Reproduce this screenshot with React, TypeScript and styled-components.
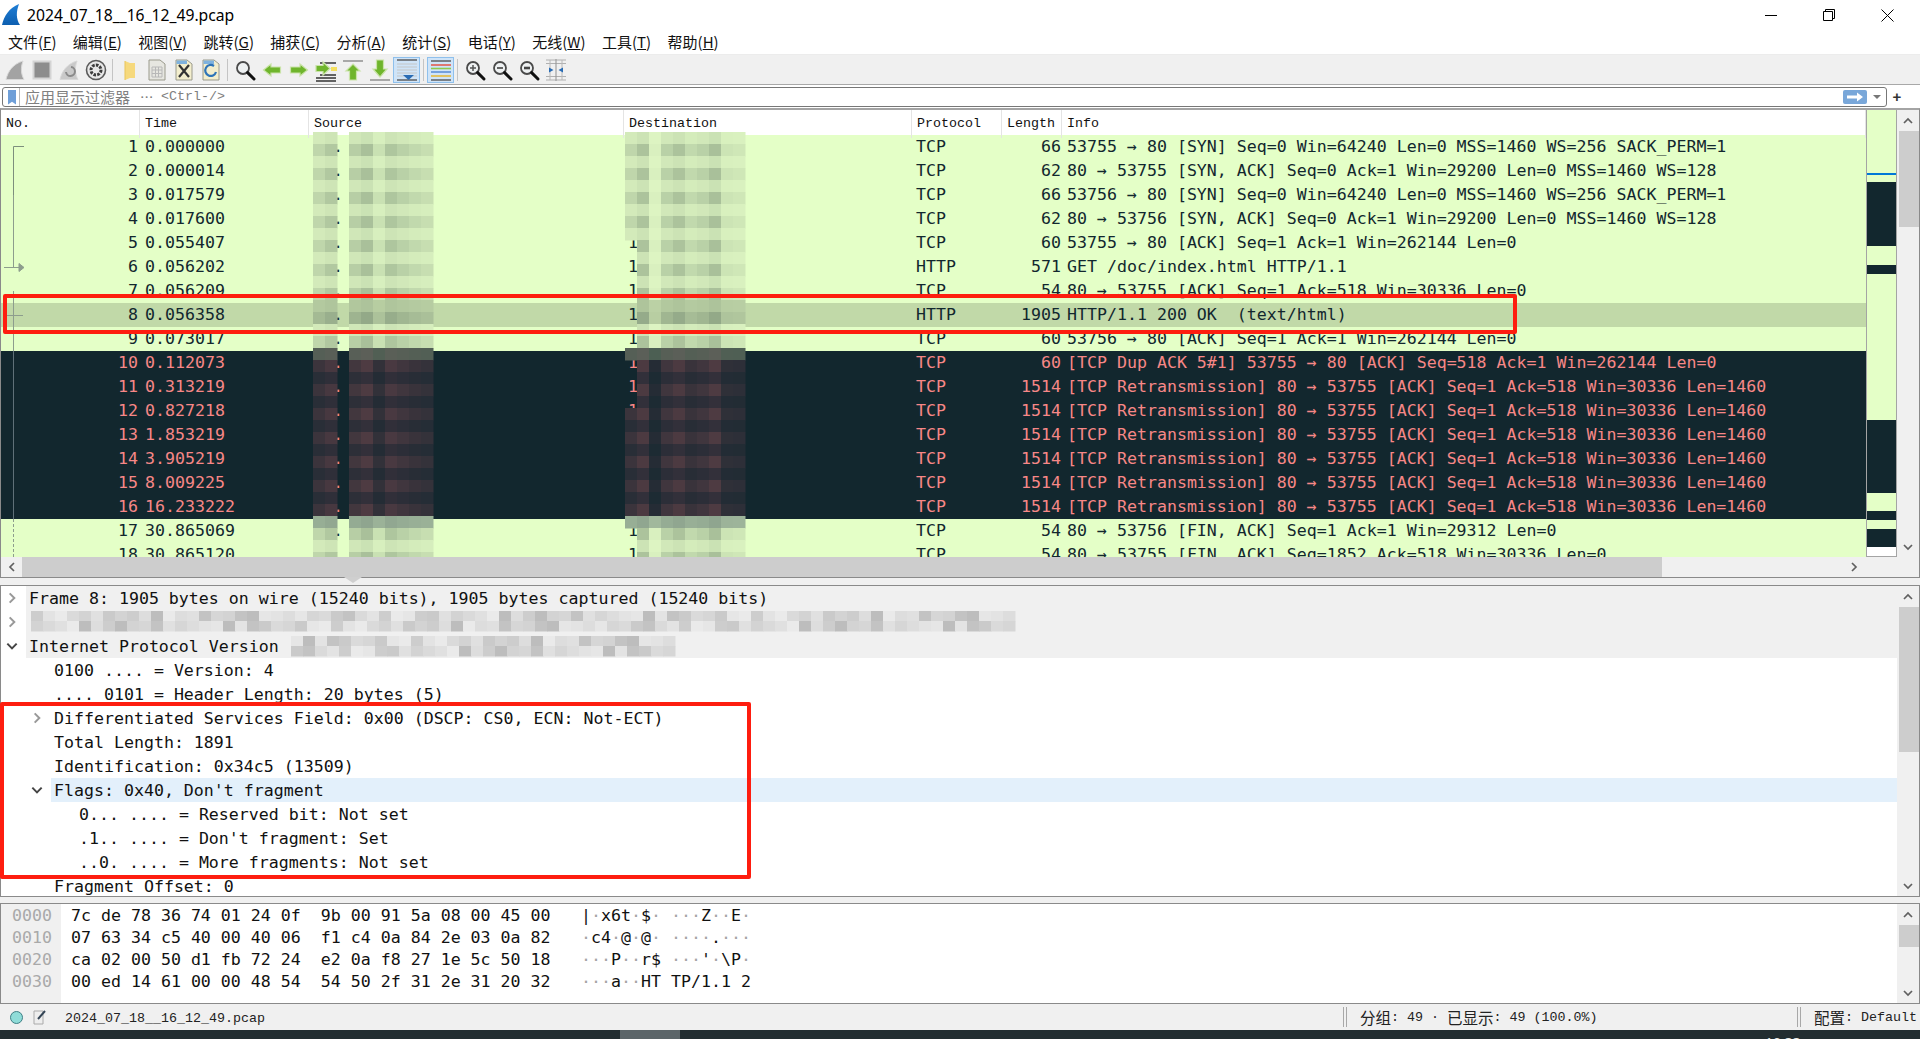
import React from "react";
import styled, { createGlobalStyle } from "styled-components";

const MONO = `"DejaVu Sans Mono", "Liberation Mono", "Noto Sans CJK SC", monospace`;
const SMALL = `"Liberation Mono", "Noto Sans CJK SC", monospace`;

const Global = createGlobalStyle`
  html, body { margin: 0; padding: 0; background: #fff; overflow: hidden; }
  * { box-sizing: border-box; }
`;

const Page = styled.div`
  position: relative;
  width: 1920px;
  height: 1039px;
  display: flex;
  flex-direction: column;
  overflow: hidden;
  background: #f0f0f0;
`;

const TitleBar = styled.div`
  height: 30px;
  background: #fff;
  display: flex;
  align-items: center;
  padding-left: 2px;
`;
const TitleText = styled.div`
  margin-left: 7px;
  font: 15.7px "Noto Sans", sans-serif;
  color: #000;
  flex: 1;
`;
const WinControls = styled.div`
  display: flex;
  align-items: center;
  height: 30px;
  padding-right: 26px;
  gap: 46px;
`;

const MenuBar = styled.div`
  height: 25px;
  background: #fff;
  display: flex;
  align-items: center;
  padding: 0 0 2px 8px;
  gap: 16.4px;
  border-bottom: 1px solid #ececec;
`;
const MenuItem = styled.span`
  font: 15px "Noto Sans CJK SC", sans-serif;
  color: #111;
`;

const Toolbar = styled.div`
  height: 30px;
  background: #f0f0f0;
  display: flex;
  align-items: center;
  padding-left: 1px;
  border-bottom: 1px solid #a8a8a8;
`;
const ToolButton = styled.div<{ $on?: boolean }>`
  width: 27px;
  height: 26px;
  display: flex;
  align-items: center;
  justify-content: center;
  background: ${(p) => (p.$on ? "#cfe4f8" : "transparent")};
  border: 1px solid ${(p) => (p.$on ? "#8fc0ec" : "transparent")};
`;
const ToolSep = styled.div`
  width: 1px;
  height: 22px;
  margin: 0 3px;
  background: #c4c4c4;
`;

const FilterRow = styled.div`
  height: 25px;
  background: #fff;
  padding: 2px 0 3px 2px;
  display: flex;
  align-items: stretch;
`;
const FilterBox = styled.div`
  width: 1885px;
  border: 1px solid #777;
  border-radius: 3px;
  display: flex;
  align-items: center;
  padding: 0 5px 0 5px;
  background: #fff;
`;
const Bookmark = styled.div`
  width: 8px;
  height: 15px;
  background: #6f9fd8;
  clip-path: polygon(0 0, 100% 0, 100% 100%, 50% 82%, 0 100%);
`;
const FilterDiv = styled.div`
  width: 1px;
  height: 18px;
  background: #bbb;
  margin: 0 5px 0 3px;
`;
const Placeholder = styled.div`
  flex: 1;
  display: flex;
  align-items: center;
  padding-bottom: 2px;
  color: #808080;
  font: 15px "Noto Sans CJK SC", sans-serif;
`;
const PlaceholderDots = styled.span`
  width: 21px;
  margin-left: 10px;
  font: 13.33px "Noto Sans CJK SC", sans-serif;
`;
const PlaceholderHint = styled.span`
  font: 13.33px ${SMALL};
  white-space: pre;
`;
const ApplyBtn = styled.div`
  width: 24px;
  height: 14px;
  background: #79a7d9;
  border-radius: 2px;
  display: flex;
  align-items: center;
  justify-content: center;
`;
const DropCaret = styled.div`
  width: 0;
  height: 0;
  margin-left: 6px;
  border-left: 4px solid transparent;
  border-right: 4px solid transparent;
  border-top: 4px solid #777;
`;
const PlusBtn = styled.div`
  width: 20px;
  text-align: center;
  font: bold 15px "Liberation Sans", sans-serif;
  color: #333;
  line-height: 20px;
`;

const PacketPane = styled.div`
  height: 470px;
  display: flex;
  flex-direction: column;
  border-top: 2px solid #a4a4a4;
  border-left: 1px solid #8a8a8a;
  border-right: 1px solid #8a8a8a;
  border-bottom: 1px solid #8a8a8a;
  margin-top: -2px;
  background: #f0f0f0;
`;
const PacketTop = styled.div`
  height: 447px;
  display: flex;
`;
const ListArea = styled.div`
  position: relative;
  width: 1865px;
  overflow: hidden;
  background: #fff;
`;
const cols = "139px 169px 315px 288px 90px 60px 1fr";
const HeaderRow = styled.div`
  height: 25px;
  display: grid;
  grid-template-columns: ${cols};
  background: #fff;
`;
const HeaderCell = styled.div`
  font: 13.33px/28px ${SMALL};
  color: #111;
  padding-left: 5px;
  border-right: 1px solid #e4e4e4;
`;
const Row = styled.div<{ $kind: string }>`
  height: 24px;
  display: grid;
  grid-template-columns: ${cols};
  font: 16.6px/24px ${MONO};
  white-space: pre;
  background: ${(p) => (p.$kind === "dark" ? "#12272e" : p.$kind === "sel" ? "#c1d9a8" : "#e4ffc7")};
  color: ${(p) => (p.$kind === "dark" ? "#f78787" : "#12272e")};
`;
const NoCell = styled.div`
  text-align: right;
  padding-right: 2px;
`;
const TimeCell = styled.div`
  padding-left: 5px;
`;
const Cell = styled.div`
  padding-left: 4px;
`;
const LenCell = styled.div`
  text-align: right;
  padding-right: 1px;
`;
const InfoCell = styled.div`
  padding-left: 5px;
  overflow: hidden;
`;
const Overlay = styled.svg`
  position: absolute;
  left: 0;
  top: 0;
  pointer-events: none;
`;
const Minimap = styled.div`
  width: 31px;
  height: 447px;
  border-left: 1px solid #a4a4a4;
  border-right: 1px solid #a4a4a4;
  border-bottom: 1px solid #a4a4a4;
  display: flex;
  flex-direction: column;
  background: #fff;
`;
const MiniSeg = styled.div<{ $h: number; $c: string }>`
  height: ${(p) => p.$h}px;
  background: ${(p) => p.$c};
  flex: none;
`;
const VBar = styled.div`
  flex: none;
  display: flex;
  flex-direction: column;
  background: #f0f0f0;
  width: 22px;
`;
const ArrowBtn = styled.div`
  height: 21px;
  flex: none;
  display: flex;
  align-items: center;
  justify-content: center;
`;
const VTrack = styled.div`
  flex: 1;
  display: flex;
  flex-direction: column;
  align-items: flex-end;
`;
const VThumb = styled.div<{ $h: number }>`
  width: 20px;
  height: ${(p) => p.$h}px;
  background: #cdcdcd;
`;
const HBar = styled.div`
  height: 20px;
  display: flex;
  align-items: stretch;
  background: #f0f0f0;
`;
const HArrow = styled.div`
  width: 21px;
  display: flex;
  align-items: center;
  justify-content: center;
`;
const HThumb = styled.div`
  width: 1640px;
  background: #cdcdcd;
`;
const HTail = styled.div`
  width: 203px;
  display: flex;
  align-items: center;
  justify-content: flex-end;
  padding-right: 5px;
`;

const Splitter = styled.div`
  position: relative;
  height: 7px;
  background: #f0f0f0;
`;
const SplitGrip = styled.div`
  position: absolute;
  left: 344px;
  top: -1px;
  width: 0;
  height: 0;
  border-left: 9px solid transparent;
  border-right: 9px solid transparent;
  border-top: 6px solid #cfcfcf;
`;

const DetailPane = styled.div`
  position: relative;
  height: 312px;
  display: flex;
  background: #fff;
  border: 1px solid #8a8a8a;
`;
const DetailList = styled.div`
  flex: 1;
  overflow: hidden;
`;
const DetailRow = styled.div`
  display: flex;
  height: 24px;
  font: 16.6px/26px ${MONO};
  color: #111;
  white-space: pre;
`;
const Gutter = styled.div<{ $level: number }>`
  width: ${(p) => 25 + p.$level * 25}px;
  flex: none;
  display: flex;
  align-items: center;
  justify-content: flex-end;
  padding-right: 7px;
`;
const RowBody = styled.div<{ $bg?: string }>`
  flex: 1;
  padding-left: 3px;
  background: ${(p) => p.$bg || "transparent"};
`;

const PaneGap = styled.div`
  height: 6px;
  background: #f0f0f0;
`;
const HexPane = styled.div`
  height: 101px;
  display: flex;
  background: #fff;
  border: 1px solid #8a8a8a;
`;
const Offsets = styled.div`
  width: 60px;
  background: #f0f0f0;
  padding: 1px 0 0 11px;
  font: 16.6px/22px ${MONO};
  color: #a9a9a9;
  white-space: pre;
`;
const HexBytes = styled.div`
  width: 520px;
  padding: 1px 0 0 10px;
  font: 16.6px/22px ${MONO};
  color: #111;
  white-space: pre;
`;
const HexAscii = styled.div`
  flex: 1;
  padding-top: 1px;
  font: 16.6px/22px ${MONO};
  color: #111;
  white-space: pre;
`;
const Dim = styled.span`
  color: #a5a5a5;
`;

const StatusBar = styled.div`
  height: 26px;
  background: #f0f0f0;
  display: flex;
  align-items: center;
  font: 13.33px ${SMALL};
  color: #222;
  white-space: pre;
  padding-left: 10px;
`;
const LedDot = styled.div`
  width: 13px;
  height: 13px;
  border-radius: 50%;
  background: #8fdcd8;
  border: 1px solid #3f7f85;
`;
const PencilSlot = styled.div`
  margin-left: 9px;
  width: 16px;
  height: 16px;
  display: flex;
`;
const StatusFile = styled.div`
  margin-left: 17px;
  width: 1278px;
  padding-top: 3px;
`;
const Grip = styled.div`
  width: 4px;
  height: 20px;
  border-left: 1px solid #a8a8a8;
  border-right: 1px solid #a8a8a8;
  margin-right: 13px;
`;
const StatusMid = styled.div`
  width: 437px;
  display: flex;
  align-items: center;
`;
const StatusEnd = styled.div`
  display: flex;
  align-items: center;
`;
const Cjk = styled.span`
  font: 15.5px "Noto Sans CJK SC", sans-serif;
  line-height: 16px;
`;
const Taskbar = styled.div`
  height: 9px;
  background: #222d31;
  padding-left: 620px;
  display: flex;
  overflow: hidden;
`;
const TaskActive = styled.div`
  width: 60px;
  height: 9px;
  background: #5c6569;
`;
const Clock = styled.div`
  margin-left: 1085px;
  padding-top: 6px;
  font: 14px/14px "Noto Sans", sans-serif;
  color: #e8e8e8;
`;

const RedBox = styled.div<{ $l: number; $t: number; $w: number; $h: number }>`
  position: absolute;
  left: ${(p) => p.$l}px;
  top: ${(p) => p.$t}px;
  width: ${(p) => p.$w}px;
  height: ${(p) => p.$h}px;
  border: 4px solid #fe1d0f;
  border-radius: 2px;
  pointer-events: none;
`;

/* ------------------ icons ------------------ */
const Chevron = ({ dir, color = "#606060", size = 12 }: { dir: "up" | "down" | "left" | "right"; color?: string; size?: number }) => {
  const d = {
    up: "M2 8 L6 4 L10 8",
    down: "M2 4 L6 8 L10 4",
    left: "M8 2 L4 6 L8 10",
    right: "M4 2 L8 6 L4 10",
  }[dir];
  return (
    <svg width={size} height={size} viewBox="0 0 12 12">
      <path d={d} fill="none" stroke={color} strokeWidth="1.7" />
    </svg>
  );
};

const Fin = ({ fill }: { fill: string }) => <path d="M3 21.5 C5 13 10 6 20 3 C17.5 10 18 16 21 21.5 Z" fill={fill} stroke="#d8d8d8" strokeWidth="1" />;

const Svg = ({ children, w = 24, h = 24 }: { children: React.ReactNode; w?: number; h?: number }) => (
  <svg width={w} height={h} viewBox="0 0 24 24">
    {children}
  </svg>
);

const Page24 = ({ fill = "#f4f4ee" }: { fill?: string }) => (
  <path d="M4 2 H15 L20 6 V22 H4 Z" fill={fill} stroke="#9a9a8c" strokeWidth="1" />
);
const Magnifier = ({ mark }: { mark?: "plus" | "minus" | "eq" }) => (
  <>
    <circle cx="10" cy="10" r="6" fill="#eef1f2" stroke="#4a4a4a" strokeWidth="1.8" />
    <path d="M14.6 14.6 L21 21" stroke="#111" strokeWidth="3" strokeLinecap="round" />
    {mark === "plus" && <path d="M7 10 H13 M10 7 V13" stroke="#555" strokeWidth="1.5" />}
    {mark === "minus" && <path d="M7 10 H13" stroke="#555" strokeWidth="1.8" />}
    {mark === "eq" && <path d="M7 10 H13" stroke="#444" strokeWidth="2.6" />}
  </>
);
const Arrow = ({ d }: { d: string }) => <path d={d} fill="#6fb52c" stroke="#c9e3a8" strokeWidth="1.2" />;

const icons: Record<string, React.ReactNode> = {
  start: <Fin fill="#a3a3a3" />,
  stop: <rect x="3.5" y="3.5" width="17" height="17" fill="#8d8d8d" stroke="#d4d4d4" strokeWidth="2" />,
  restart: (
    <>
      <Fin fill="#c9c9c9" />
      <path d="M9 14 a4.5 4.5 0 1 0 5 -5" fill="none" stroke="#8a8a8a" strokeWidth="2" />
    </>
  ),
  options: (
    <>
      <circle cx="12" cy="12" r="9.5" fill="#e8e8e8" stroke="#5a5a5a" strokeWidth="1.6" />
      <circle cx="12" cy="12" r="5" fill="none" stroke="#3c3c3c" strokeWidth="3" strokeDasharray="2.6 1.2" />
    </>
  ),
  open: (
    <>
      <path d="M7 3 L12 5 H17 V20 H12 L7 22 Z" fill="#f6d97d" />
      <path d="M7 3 V22" stroke="#e9c55b" strokeWidth="1" />
    </>
  ),
  file: (
    <>
      <Page24 fill="#e6e6e0" />
      <path d="M7 9 H17 V19 H7 Z M7 12 H17 M7 15.5 H17 M10.5 9 V19 M13.5 9 V19" fill="none" stroke="#b8b8b8" strokeWidth="1" />
    </>
  ),
  close: (
    <>
      <Page24 fill="#f3eecd" />
      <path d="M4.5 2.5 H15 V6 H4.5 Z" fill="#7fb2de" />
      <path d="M7 7 L17 19 M17 7 L7 19" stroke="#333" strokeWidth="2.2" />
    </>
  ),
  reload: (
    <>
      <Page24 fill="#f3eecd" />
      <path d="M4.5 2.5 H15 V6 H4.5 Z" fill="#7fb2de" />
      <path d="M15 8 a5.5 5.5 0 1 0 2 6" fill="none" stroke="#2e74b8" strokeWidth="2.2" />
    </>
  ),
  find: <Magnifier />,
  back: <Arrow d="M3.5 12 L11 6 V9 H20.5 V15 H11 V18 Z" />,
  forward: <Arrow d="M20.5 12 L13 6 V9 H3.5 V15 H13 V18 Z" />,
  goto: (
    <>
      <path d="M6 5 H22 M6 17 H22 M2 20 H22 M2 23 H22" stroke="#333" strokeWidth="1.4" />
      <path d="M17 9 H23 V13 H17 Z" fill="#f4df5e" />
      <Arrow d="M16 10.5 L9 4 V7.5 H2 V13.5 H9 V17 Z" />
    </>
  ),
  first: (
    <>
      <path d="M2 3 H22" stroke="#a8a8a8" strokeWidth="2" />
      <Arrow d="M12 6 L19 13 H15.5 V22 H8.5 V13 H5 Z" />
    </>
  ),
  last: (
    <>
      <path d="M2 22 H22" stroke="#a8a8a8" strokeWidth="2" />
      <Arrow d="M12 19 L19 11 H15.5 V2 H8.5 V11 H5 Z" />
    </>
  ),
  autoscroll: (
    <>
      <path d="M2 2 H22" stroke="#555" strokeWidth="1.4" />
      <path d="M2 6 H22 M2 9 H22 M2 12 H22 M2 15 H22 M2 18 H22" stroke="#c6c6c6" strokeWidth="1.2" />
      <path d="M2 22 H22" stroke="#555" strokeWidth="1.4" />
      <path d="M8 17 H19 L13.5 22 Z" fill="#2a6cb4" />
    </>
  ),
  colorize: (
    <>
      <path d="M2 3 H22" stroke="#555" strokeWidth="1.4" />
      <path d="M2 7 H22" stroke="#e25d4f" strokeWidth="1.6" />
      <path d="M2 10.5 H22" stroke="#8fc94f" strokeWidth="1.6" />
      <path d="M2 14 H22" stroke="#5d8fd6" strokeWidth="1.6" />
      <path d="M2 18 H22" stroke="#e5b93c" strokeWidth="1.6" />
      <path d="M2 22 H22" stroke="#555" strokeWidth="1.4" />
    </>
  ),
  zoomIn: <Magnifier mark="plus" />,
  zoomOut: <Magnifier mark="minus" />,
  zoomReset: <Magnifier mark="eq" />,
  resize: (
    <>
      <path d="M2 2 H22 M2 5.5 H22 M2 18.5 H22 M2 22 H22" stroke="#b0b0b0" strokeWidth="1.1" />
      <path d="M6 2 V22 M18 2 V22" stroke="#b8b8b8" strokeWidth="1" />
      <path d="M12 1 V23" stroke="#999" strokeWidth="1.1" />
      <path d="M5 9.5 L9.5 12 L5 14.5 Z M19 9.5 L14.5 12 L19 14.5 Z" fill="#2a6cb4" />
    </>
  ),
};

const tools: (string | [string, boolean])[] = [
  "start", "stop", "restart", "options", "|",
  "open", "file", "close", "reload", "|",
  "find", "back", "forward", "goto", "first", "last", ["autoscroll", true], "|",
  ["colorize", true], "|",
  "zoomIn", "zoomOut", "zoomReset", "resize",
];

/* ------------------ data ------------------ */
type Pkt = [number, string, string, number, string];
const RETR = "[TCP Retransmission] 80 → 53755 [ACK] Seq=1 Ack=518 Win=30336 Len=1460";
const packets: Pkt[] = [
  [1, "0.000000", "TCP", 66, "53755 → 80 [SYN] Seq=0 Win=64240 Len=0 MSS=1460 WS=256 SACK_PERM=1"],
  [2, "0.000014", "TCP", 62, "80 → 53755 [SYN, ACK] Seq=0 Ack=1 Win=29200 Len=0 MSS=1460 WS=128"],
  [3, "0.017579", "TCP", 66, "53756 → 80 [SYN] Seq=0 Win=64240 Len=0 MSS=1460 WS=256 SACK_PERM=1"],
  [4, "0.017600", "TCP", 62, "80 → 53756 [SYN, ACK] Seq=0 Ack=1 Win=29200 Len=0 MSS=1460 WS=128"],
  [5, "0.055407", "TCP", 60, "53755 → 80 [ACK] Seq=1 Ack=1 Win=262144 Len=0"],
  [6, "0.056202", "HTTP", 571, "GET /doc/index.html HTTP/1.1"],
  [7, "0.056209", "TCP", 54, "80 → 53755 [ACK] Seq=1 Ack=518 Win=30336 Len=0"],
  [8, "0.056358", "HTTP", 1905, "HTTP/1.1 200 OK  (text/html)"],
  [9, "0.073017", "TCP", 60, "53756 → 80 [ACK] Seq=1 Ack=1 Win=262144 Len=0"],
  [10, "0.112073", "TCP", 60, "[TCP Dup ACK 5#1] 53755 → 80 [ACK] Seq=518 Ack=1 Win=262144 Len=0"],
  [11, "0.313219", "TCP", 1514, RETR],
  [12, "0.827218", "TCP", 1514, RETR],
  [13, "1.853219", "TCP", 1514, RETR],
  [14, "3.905219", "TCP", 1514, RETR],
  [15, "8.009225", "TCP", 1514, RETR],
  [16, "16.233222", "TCP", 1514, RETR],
  [17, "30.865069", "TCP", 54, "80 → 53756 [FIN, ACK] Seq=1 Ack=1 Win=29312 Len=0"],
  [18, "30.865120", "TCP", 54, "80 → 53755 [FIN, ACK] Seq=1852 Ack=518 Win=30336 Len=0"],
];
const kindOf = (n: number) => (n === 8 ? "sel" : n >= 10 && n <= 16 ? "dark" : "light");

const LIGHT = "#e4ffc7";
const DARKBG = "#12272e";
const mini: [number, string][] = [
  [63, LIGHT], [2, "#0078d7"], [7, LIGHT], [64, DARKBG], [19, LIGHT], [9, DARKBG], [146, LIGHT],
  [73, DARKBG], [18, LIGHT], [9, DARKBG], [9, LIGHT], [18, DARKBG],
];

const details: { level: number; text: string; arrow?: "right" | "down"; bg?: string }[] = [
  { level: 0, arrow: "right", bg: "#f0f0f0", text: "Frame 8: 1905 bytes on wire (15240 bits), 1905 bytes captured (15240 bits)" },
  { level: 0, arrow: "right", bg: "#f0f0f0", text: "" },
  { level: 0, arrow: "down", bg: "#f0f0f0", text: "Internet Protocol Version" },
  { level: 1, text: "0100 .... = Version: 4" },
  { level: 1, text: ".... 0101 = Header Length: 20 bytes (5)" },
  { level: 1, arrow: "right", text: "Differentiated Services Field: 0x00 (DSCP: CS0, ECN: Not-ECT)" },
  { level: 1, text: "Total Length: 1891" },
  { level: 1, text: "Identification: 0x34c5 (13509)" },
  { level: 1, arrow: "down", bg: "#e3f0fb", text: "Flags: 0x40, Don't fragment" },
  { level: 2, text: "0... .... = Reserved bit: Not set" },
  { level: 2, text: ".1.. .... = Don't fragment: Set" },
  { level: 2, text: "..0. .... = More fragments: Not set" },
  { level: 1, text: "Fragment Offset: 0" },
];

const hex: [string, string, string][] = [
  ["0000", "7c de 78 36 74 01 24 0f  9b 00 91 5a 08 00 45 00", "|·x6t·$· ···Z··E·"],
  ["0010", "07 63 34 c5 40 00 40 06  f1 c4 0a 84 2e 03 0a 82", "·c4·@·@· ····.···"],
  ["0020", "ca 02 00 50 d1 fb 72 24  e2 0a f8 27 1e 5c 50 18", "···P··r$ ···'·\\P·"],
  ["0030", "00 ed 14 61 00 00 48 54  54 50 2f 31 2e 31 20 32", "···a··HT TP/1.1 2"],
];

/* ------------------ mosaic (drawn redaction) ------------------ */
const h2 = (s: string) => [1, 3, 5].map((i) => parseInt(s.slice(i, i + 2), 16));
const mix = (a: string, b: string, t: number) => {
  const A = h2(a);
  const B = h2(b);
  return `rgb(${A.map((v, i) => Math.round(v + (B[i] - v) * t)).join(",")})`;
};
const SRC_W = [0.6, 0.85, 0, 0.75, 1, 0.4, 0.9, 0.7, 0.55, 0.45];
const DST_W = [0.6, 0.95, 0.12, 0.7, 0.95, 0.55, 0.7, 1, 0.35, 0.3];

const cellColor = (y: number, w: number) => {
  const strong = y % 24 === 0;
  const t = strong ? w : w * 0.38;
  if (y === 348) return mix("#4a5f52", "#5c5f58", w);
  if (y === 516) return mix("#a3bb9e", "#8fa58f", w);
  if (y > 348 && y < 516) return strong ? mix("#1f2a33", "#4e3b42", w) : mix("#1a2a32", "#33303a", w);
  if (y === 300 || y === 312) return mix("#bdd3a6", "#93a988", t);
  return mix("#dff7c4", "#a9c09a", t);
};

const mosaicRects = () => {
  const out: React.ReactNode[] = [];
  for (let y = 132; y < 447 + 110; y += 12) {
    SRC_W.forEach((w, i) => {
      if (w > 0) out.push(<rect key={`s${y}-${i}`} x={312 + i * 12} y={y - 110} width={12.5} height={12.5} fill={cellColor(y, w)} />);
    });
    DST_W.forEach((w, i) => {
      if (i === 0 && y >= 240 && y !== 348 && y !== 516 && !(y >= 408 && y <= 508)) return;
      out.push(<rect key={`d${y}-${i}`} x={624 + i * 12} y={y - 110} width={12.5} height={12.5} fill={cellColor(y, w)} />);
    });
  }
  return out;
};

const GREYS = [0.25, 0.55, 0.35, 0.15, 0.7, 0.3, 0.45, 0.1, 0.6, 0.2, 0.4, 0.8];
const detailMosaic = () => {
  const out: React.ReactNode[] = [];
  const band = (x0: number, x1: number, y0: number, rows: number, seed: number) => {
    for (let r = 0; r < rows; r++) {
      for (let x = x0, i = 0; x < x1; x += 12, i++) {
        const w = GREYS[(i * 7 + r * 5 + seed + ((i * i) % 5)) % GREYS.length];
        out.push(<rect key={`m${x0}-${r}-${i}`} x={x} y={y0 + r * 10} width={12.5} height={10.5} fill={mix("#f0f0f0", "#b0b0b0", w)} />);
      }
    }
  };
  band(30, 1014, 25, 2, 1);
  band(290, 672, 50, 2, 3);
  return out;
};

/* ------------------ component ------------------ */
const Mnemonic = ({ cn, l }: { cn: string; l: string }) => (
  <MenuItem>
    {cn}(<u>{l}</u>)
  </MenuItem>
);

const VScroll = ({ thumb }: { thumb: number }) => (
  <VBar>
    <ArrowBtn>
      <Chevron dir="up" />
    </ArrowBtn>
    <VTrack>
      <VThumb $h={thumb} />
    </VTrack>
    <ArrowBtn>
      <Chevron dir="down" />
    </ArrowBtn>
  </VBar>
);

export default function App() {
  return (
    <Page>
      <Global />
      <TitleBar>
        <svg width="18" height="22" viewBox="0 0 18 22">
          <defs>
            <linearGradient id="fin" x1="0" y1="0" x2="0" y2="1">
              <stop offset="0" stopColor="#1f7ed6" />
              <stop offset="1" stopColor="#0d5fb0" />
            </linearGradient>
          </defs>
          <path d="M0 21 C2 12 7 4 17 0 C14 8 14 15 18 21 Z" fill="url(#fin)" />
        </svg>
        <TitleText>2024_07_18__16_12_49.pcap</TitleText>
        <WinControls>
          <svg width="12" height="12" viewBox="0 0 12 12">
            <path d="M0 6.5 H12" stroke="#000" strokeWidth="1" />
          </svg>
          <svg width="12" height="12" viewBox="0 0 12 12">
            <path d="M0.5 2.5 H9.5 V11.5 H0.5 Z M2.5 2.5 V0.5 H11.5 V9.5 H9.5" fill="none" stroke="#000" strokeWidth="1" />
          </svg>
          <svg width="13" height="13" viewBox="0 0 13 13">
            <path d="M0.5 0.5 L12.5 12.5 M12.5 0.5 L0.5 12.5" stroke="#000" strokeWidth="1" />
          </svg>
        </WinControls>
      </TitleBar>

      <MenuBar>
        <Mnemonic cn="文件" l="F" />
        <Mnemonic cn="编辑" l="E" />
        <Mnemonic cn="视图" l="V" />
        <Mnemonic cn="跳转" l="G" />
        <Mnemonic cn="捕获" l="C" />
        <Mnemonic cn="分析" l="A" />
        <Mnemonic cn="统计" l="S" />
        <Mnemonic cn="电话" l="Y" />
        <Mnemonic cn="无线" l="W" />
        <Mnemonic cn="工具" l="T" />
        <Mnemonic cn="帮助" l="H" />
      </MenuBar>

      <Toolbar>
        {tools.map((t, i) => {
          if (t === "|") return <ToolSep key={i} />;
          const name = typeof t === "string" ? t : t[0];
          const on = typeof t !== "string";
          return (
            <ToolButton key={i} $on={on}>
              <Svg>{icons[name]}</Svg>
            </ToolButton>
          );
        })}
      </Toolbar>

      <FilterRow>
        <FilterBox>
          <Bookmark />
          <FilterDiv />
          <Placeholder>
            应用显示过滤器
            <PlaceholderDots>⋯</PlaceholderDots>
            <PlaceholderHint>{"<Ctrl-/>"}</PlaceholderHint>
          </Placeholder>
          <ApplyBtn>
            <svg width="16" height="10" viewBox="0 0 16 10">
              <path d="M0 3.5 H10 V0.5 L16 5 L10 9.5 V6.5 H0 Z" fill="#fff" />
            </svg>
          </ApplyBtn>
          <DropCaret />
        </FilterBox>
        <PlusBtn>+</PlusBtn>
      </FilterRow>

      <PacketPane>
        <PacketTop>
          <ListArea>
            <HeaderRow>
              <HeaderCell>No.</HeaderCell>
              <HeaderCell>Time</HeaderCell>
              <HeaderCell>Source</HeaderCell>
              <HeaderCell>Destination</HeaderCell>
              <HeaderCell>Protocol</HeaderCell>
              <HeaderCell>Length</HeaderCell>
              <HeaderCell>Info</HeaderCell>
            </HeaderRow>
            {packets.map(([n, time, proto, len, info]) => (
              <Row key={n} $kind={kindOf(n)}>
                <NoCell>{n}</NoCell>
                <TimeCell>{time}</TimeCell>
                <Cell>{"  ."}</Cell>
                <Cell>1</Cell>
                <Cell>{proto}</Cell>
                <LenCell>{len}</LenCell>
                <InfoCell>{info}</InfoCell>
              </Row>
            ))}
            <Overlay width={1865} height={447} viewBox="0 0 1865 447">
              {mosaicRects()}
              <path d="M23 36.5 H12.5 V85" fill="none" stroke="#7d8f7d" strokeWidth="1" />
              <path d="M12.5 85 V157 M12.5 181 V241" fill="none" stroke="#8d9d8d" strokeWidth="1" />
              <path d="M3 157.5 H22 M18 153.5 L23 157.5 L18 161.5 Z" fill="#8d9d8d" stroke="#8d9d8d" strokeWidth="1" />
              <path d="M12.5 241 V409" fill="none" stroke="#5f7078" strokeWidth="1" />
              <path d="M12.5 409 V447" fill="none" stroke="#8d9d8d" strokeWidth="1" strokeDasharray="3 2" />
              <path d="M3 205.5 H22 M12.5 181 V217" fill="none" stroke="#8d9d8d" strokeWidth="1" />
            </Overlay>
          </ListArea>
          <Minimap>
            {mini.map(([h, c], i) => (
              <MiniSeg key={i} $h={h} $c={c} />
            ))}
          </Minimap>
          <VScroll thumb={96} />
        </PacketTop>
        <HBar>
          <HArrow>
            <Chevron dir="left" />
          </HArrow>
          <HThumb />
          <HTail>
            <Chevron dir="right" />
          </HTail>
        </HBar>
      </PacketPane>

      <Splitter>
        <SplitGrip />
      </Splitter>

      <DetailPane>
        <DetailList>
          {details.map((d, i) => (
            <DetailRow key={i}>
              <Gutter $level={d.level}>{d.arrow && <Chevron dir={d.arrow} color={d.arrow === "down" ? "#444" : "#999"} size={14} />}</Gutter>
              <RowBody $bg={d.bg}>{d.text}</RowBody>
            </DetailRow>
          ))}
        </DetailList>
        <VScroll thumb={145} />
        <Overlay width={1880} height={100} viewBox="0 0 1880 100">
          {detailMosaic()}
        </Overlay>
      </DetailPane>

      <PaneGap />

      <HexPane>
        <Offsets>{hex.map((h) => h[0]).join("\n")}</Offsets>
        <HexBytes>{hex.map((h) => h[1]).join("\n")}</HexBytes>
        <HexAscii>
          {hex.map((h, i) => (
            <div key={i}>
              {h[2].split("").map((c, j) => (c === "·" ? <Dim key={j}>·</Dim> : c))}
            </div>
          ))}
        </HexAscii>
        <VScroll thumb={22} />
      </HexPane>

      <StatusBar>
        <LedDot />
        <PencilSlot>
          <svg width="16" height="16" viewBox="0 0 16 16">
            <path d="M2 2 H11 V15 H2 Z" fill="#eee" stroke="#aaa" strokeWidth="1" />
            <path d="M6 10 L13 2" stroke="#345" strokeWidth="2" />
          </svg>
        </PencilSlot>
        <StatusFile>2024_07_18__16_12_49.pcap</StatusFile>
        <Grip />
        <StatusMid>
          <Cjk>分组</Cjk>: 49 · <Cjk>已显示</Cjk>: 49 (100.0%)
        </StatusMid>
        <Grip />
        <StatusEnd>
          <Cjk>配置</Cjk>: Default
        </StatusEnd>
      </StatusBar>

      <Taskbar>
        <TaskActive />
        <Clock>10:33</Clock>
      </Taskbar>

      <RedBox $l={3} $t={294} $w={1514} $h={40} />
      <RedBox $l={0} $t={702} $w={751} $h={177} />
    </Page>
  );
}
